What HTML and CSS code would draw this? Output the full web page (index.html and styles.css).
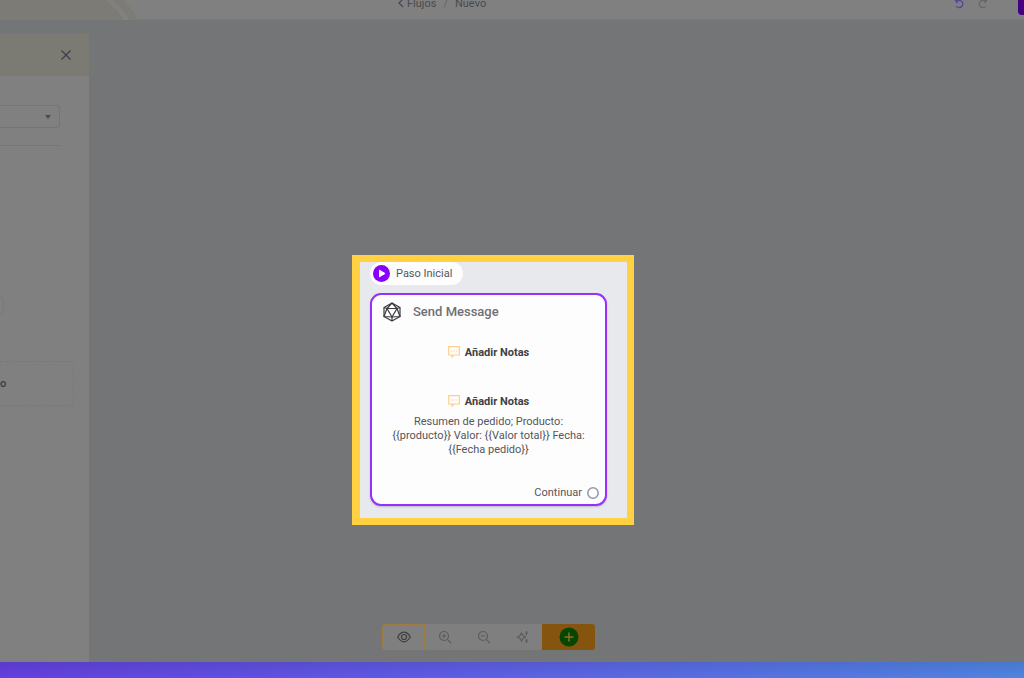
FILE: index.html
```html
<!DOCTYPE html>
<html lang="es">
<head>
<meta charset="utf-8">
<title>Flujos / Nuevo</title>
<link rel="stylesheet" href="styles.css">
</head>
<body>
<div class="app">
  <header class="topbar">
    <svg class="topbar-art" width="140" height="38" viewBox="0 0 140 38" aria-hidden="true">
      <path d="M0 0H95L108 18Q119 27 124 36L82 37H0Z" fill="#7c7b75"/>
      <path d="M110 0L125 18Q133 26 138 36H130Q123 26 114 18L100 0Z" fill="#7c7b76"/>
      <path d="M95 0L108 18Q119 27 124 36H130Q123 26 114 18L100 0Z" fill="#818181"/>
    </svg>
    <nav class="crumbs" aria-label="Ruta">
      <a href="#" class="crumb"><svg width="6" height="10" viewBox="0 0 6 10"><path d="M5 1L1 5L5 9" fill="none" stroke="#4a4a4c" stroke-width="1.3"/></svg>Flujos</a>
      <span class="slash">/</span>
      <span>Nuevo</span>
    </nav>
    <div class="history">
      <button class="plain undo" aria-label="Deshacer"><svg width="12" height="12" viewBox="0 0 12 12"><path d="M3.500 1L1.500 3.500L3.500 6M1.500 3.500H6.500A3.700 3.700 0 1 1 2 9" fill="none" stroke="currentColor" stroke-width="1.3"/></svg></button>
      <button class="plain redo" aria-label="Rehacer"><svg width="12" height="12" viewBox="0 0 12 12"><path d="M8.500 1L10.500 3.500L8.500 6M10.500 3.500H5.500A3.700 3.700 0 1 0 10 9" fill="none" stroke="currentColor" stroke-width="1.3"/></svg></button>
      <button class="save" aria-label="Guardar"></button>
    </div>
  </header>

  <main class="workspace">
    <aside class="panel">
      <div class="panel-head">
        <button class="plain close" aria-label="Cerrar"><svg width="10" height="10" viewBox="0 0 10 10"><path d="M.5 .5L9.500 9.500M9.500 .5L.5 9.500" stroke="currentColor" stroke-width="1.200"/></svg></button>
      </div>
      <div class="panel-body">
        <div class="field">
          <select class="picker" aria-label="Opciones"><option></option></select>
          <svg class="caret" width="6" height="4" viewBox="0 0 6 4"><path d="M0 0H6L3 4Z" fill="#4c4c4c"/></svg>
        </div>
        <hr class="rule">
        <div class="tab"></div>
        <button class="dropzone">o</button>
      </div>
    </aside>

    <section class="canvas">
      <div class="spotlight">
        <div class="start"><svg width="17" height="17" viewBox="0 0 17 17"><circle cx="8.500" cy="8.500" r="8.500" fill="#8a00ff"/><path d="M6.500 5.200V11.800L12 8.500Z" fill="#fff" stroke="#fff" stroke-linejoin="round"/></svg>Paso Inicial</div>
        <article class="node">
          <h2 class="node-title">
            <svg width="20" height="20" viewBox="0 0 20 20" fill="none" stroke="#39393d" stroke-width="1.200" stroke-linejoin="round"><path d="M10 1L18 5.500V14.500L10 19L2 14.500V5.500Z"/><path d="M5 6.500H15L10 15Z"/><path d="M10 1L5 6.500L2 5.500M10 1L15 6.500L18 5.500M5 6.500L2 14.500L10 15L18 14.500L15 6.500M10 15V19"/></svg>
            Send Message
          </h2>
          <button class="plain note"><svg width="12" height="12" viewBox="0 0 12 12" fill="none" stroke="#ffcf87" stroke-width="1.200"><path d="M.7 .7H11.300V9H6L4 11V9H.7Z"/><path d="M3 5H4.200M5.400 5H6.600M7.800 5H9"/></svg>Añadir Notas</button>
          <button class="plain note second"><svg width="12" height="12" viewBox="0 0 12 12" fill="none" stroke="#ffcf87" stroke-width="1.200"><path d="M.7 .7H11.300V9H6L4 11V9H.7Z"/><path d="M3 5H4.200M5.400 5H6.600M7.800 5H9"/></svg>Añadir Notas</button>
          <p class="message">Resumen de pedido; Producto:<br>{{producto}} Valor: {{Valor total}} Fecha:<br>{{Fecha pedido}}</p>
          <div class="next">Continuar <svg width="12" height="12" viewBox="0 0 12 12"><circle cx="6" cy="6" r="5.200" fill="none" stroke="#8f98aa" stroke-width="1.500"/></svg></div>
        </article>
      </div>

      <div class="tools" role="toolbar" aria-label="Vista">
        <button class="tool active" aria-label="Ver"><svg width="14" height="12" viewBox="0 0 14 12" fill="none" stroke="#3e3e40" stroke-width="1.200"><path d="M.7 6Q3.500 1.200 7 1.200T13.300 6Q10.500 10.800 7 10.800T.7 6Z"/><circle cx="7" cy="6" r="2.500"/></svg></button>
        <button class="tool" aria-label="Acercar"><svg width="14" height="14" viewBox="0 0 14 14" fill="none" stroke="#5c5d5f" stroke-width="1.200"><circle cx="6" cy="6" r="4.500"/><path d="M9.300 9.300L13 13M4 6H8M6 4V8"/></svg></button>
        <button class="tool" aria-label="Alejar"><svg width="14" height="14" viewBox="0 0 14 14" fill="none" stroke="#5c5d5f" stroke-width="1.200"><circle cx="6" cy="6" r="4.500"/><path d="M9.300 9.300L13 13M4 6H8"/></svg></button>
        <button class="tool" aria-label="Ordenar"><svg width="14" height="14" viewBox="0 0 14 14" fill="none" stroke="#5c5d5f" stroke-width="1.200"><path d="M5.500 3L7 5.500L9.500 7L7 8.500L5.500 11L4 8.500L1.500 7L4 5.500Z"/><path d="M10.500 1V5M9 3H12M10.500 9V13M9 11H12"/></svg></button>
        <button class="tool add" aria-label="Añadir"><svg width="20" height="20" viewBox="0 0 20 20"><circle cx="10" cy="10" r="9.500" fill="#064600"/><path d="M10 5.500V14.500M5.500 10H14.500" stroke="#8b701c" stroke-width="1.500"/></svg></button>
      </div>
    </section>
  </main>
  <footer class="strip"></footer>
</div>
</body>
</html>
```
FILE: styles.css
```css
* { box-sizing: border-box; }

body {
  margin: 0;
  font-family: Roboto, "Open Sans", sans-serif;
  font-size: 11px;
  color: #55555a;
}

button { font: inherit; color: inherit; cursor: pointer; }

.plain {
  display: flex;
  align-items: center;
  padding: 0;
  border: 0;
  background: none;
}

.app {
  display: flex;
  flex-direction: column;
  height: 100vh;
  overflow: hidden;
}

.topbar {
  display: grid;
  grid-template-columns: 398px 1fr auto;
  align-items: center;
  flex: none;
  height: 38px;
  margin-top: -18px;
  padding-top: 2px;
  background: #808080;
  border-bottom: 1px solid #7a7a7a;
}

.topbar-art { align-self: start; }

.crumbs {
  display: flex;
  align-items: center;
  gap: 7px;
  color: #4a4a4c;
}

.crumb {
  display: flex;
  align-items: center;
  gap: 3px;
  color: inherit;
  text-decoration: none;
}

.slash { color: #626466; }

.history { display: flex; align-items: center; gap: 10px; }
.undo { color: #554499; }
.redo { color: #646769; }

.save {
  width: 6px;
  height: 24px;
  margin-left: 20px;
  padding: 0;
  border: 0;
  border-radius: 4px 0 0 4px;
  background: #440080;
}

.workspace {
  display: grid;
  grid-template-columns: 89px 1fr;
  flex: 1;
  min-height: 0;
  background: #747577;
}

.panel {
  display: flex;
  flex-direction: column;
  margin-top: 14px;
  background: #808080;
}

.panel-head {
  display: flex;
  align-items: center;
  justify-content: flex-end;
  height: 42px;
  padding-right: 18px;
  background: #7b7a73;
}

.close { color: #403b50; }

.panel-body {
  display: flex;
  flex-direction: column;
  padding: 29px 15px 0 0;
}

.field {
  display: flex;
  align-items: center;
  width: 60px;
  height: 23px;
  border: 1px solid #757575;
  border-left: 0;
  border-radius: 0 3px 3px 0;
}

.picker {
  flex: 1;
  min-width: 0;
  height: 100%;
  border: 0;
  background: none;
  appearance: none;
}

.caret { margin-right: 8px; }

.rule {
  width: 60px;
  margin: 17px 0 0;
  border: 0;
  border-top: 1px solid #757575;
}

.tab {
  width: 4px;
  height: 18px;
  margin-top: 150px;
  border: 1px solid #7a7a7a;
  border-left: 0;
  border-radius: 0 4px 4px 0;
}

.dropzone {
  height: 45px;
  margin-top: 47px;
  padding: 0;
  border: 1px dashed #777681;
  border-left: 0;
  border-radius: 0 4px 4px 0;
  background: none;
  color: #3c3c3c;
  font-weight: 500;
  text-align: left;
}

.canvas { position: relative; }

.spotlight {
  position: absolute;
  top: 235px;
  left: 263px;
  width: 282px;
  padding: 0 20px 12px 10px;
  border: 7px solid #ffd143;
  border-left-width: 8px;
  background: #e8e9ed;
}

.start {
  display: flex;
  align-items: center;
  gap: 6px;
  width: max-content;
  height: 23px;
  padding: 0 11px 0 3px;
  border-radius: 12px;
  background: #fdfdfe;
}

.node {
  display: flex;
  flex-direction: column;
  align-items: center;
  width: 237px;
  margin-top: 8px;
  padding: 7px 6px 3px;
  border: 2px solid #9630ff;
  border-radius: 11px;
  background: #fdfdfe;
  box-shadow: 0 1px 2px #bbbbc8;
}

.node-title {
  display: flex;
  align-items: center;
  align-self: stretch;
  gap: 11px;
  margin: 0;
  padding-left: 4px;
  color: #707074;
  font-size: 13px;
  font-weight: 500;
  line-height: 20px;
}

.note {
  gap: 5px;
  height: 16px;
  margin-top: 22px;
  color: #404044;
  font-weight: 700;
}

.second { margin-top: 33px; }

.message {
  margin: 6px 0 0;
  line-height: 14px;
  text-align: center;
  white-space: nowrap;
}

.next {
  display: flex;
  align-items: center;
  align-self: flex-end;
  gap: 5px;
  margin-top: 28px;
  line-height: 16px;
}

.tools {
  position: absolute;
  bottom: 12px;
  left: 293px;
  display: flex;
  height: 26px;
}

.tool {
  display: grid;
  place-items: center;
  width: 39px;
  padding: 0;
  border: 0;
  background: #7f7f7f;
}

.active {
  width: 43px;
  border: 1px solid #a07b43;
  border-radius: 3px 0 0 3px;
}

.add {
  width: 53px;
  border-radius: 0 3px 3px 0;
  background: #85550f;
}

.strip {
  flex: none;
  height: 16px;
  background:
    linear-gradient(#00000018, #00000000),
    linear-gradient(90deg, #6340df, #5d61e6 50%, #5084e2);
}
```
